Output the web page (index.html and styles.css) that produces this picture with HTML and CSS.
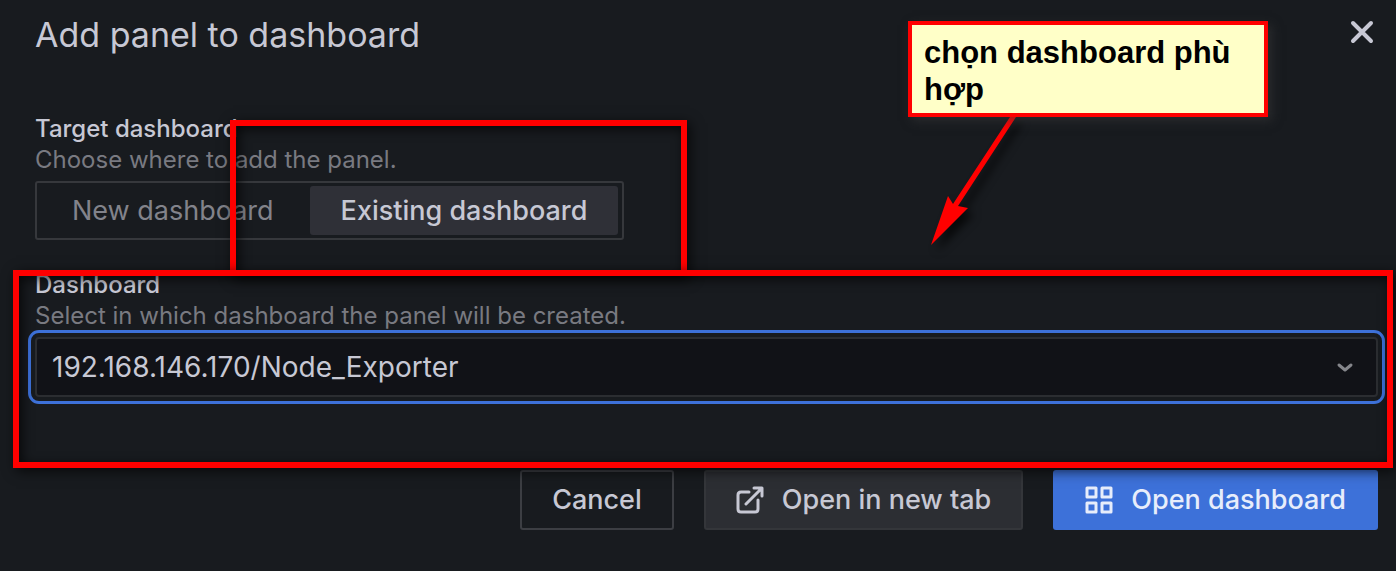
FILE: index.html
```html
<!DOCTYPE html>
<html lang="en">
<head>
<meta charset="utf-8">
<title>Add panel to dashboard</title>
<link rel="stylesheet" href="styles.css">
</head>
<body>
<main class="modal">
  <header class="modal-header">
    <h1 class="modal-title">Add panel to dashboard</h1>
    <button class="close" type="button" aria-label="Close">
      <svg width="24" height="24" viewBox="0 0 24 24" fill="none" stroke="currentColor" stroke-width="4" stroke-linecap="round"><path d="M3 3 21 21M21 3 3 21"/></svg>
    </button>
  </header>
  <form class="form">
    <fieldset class="field">
      <legend class="label">Target dashboard</legend>
      <p class="description">Choose where to add the panel.</p>
      <div class="radio-group">
        <input class="radio" type="radio" name="target" id="target-new">
        <label class="option" for="target-new">New dashboard</label>
        <input class="radio" type="radio" name="target" id="target-existing" checked>
        <label class="option" for="target-existing">Existing dashboard</label>
      </div>
    </fieldset>
    <div class="field">
      <label class="label" for="dashboard">Dashboard</label>
      <p class="description">Select in which dashboard the panel will be created.</p>
      <div class="select-wrap">
        <select class="select" id="dashboard">
          <option>192.168.146.170/Node_Exporter</option>
        </select>
        <svg class="caret" width="18" height="12" viewBox="0 0 18 12" fill="none" stroke="currentColor" stroke-width="3" stroke-linecap="round" stroke-linejoin="round"><path d="M3 4 9 9 15 4"/></svg>
      </div>
    </div>
    <div class="actions">
      <button class="button button-outline" type="button">Cancel</button>
      <button class="button button-secondary" type="button">
        <svg class="icon" width="28" height="28" viewBox="0 0 28 28" fill="none" stroke="currentColor" stroke-width="3" stroke-linecap="round" stroke-linejoin="round"><path d="M13 6H5Q2 6 2 9V23Q2 26 5 26H19Q22 26 22 23V14M10 18 25 3M18 2H26V10"/></svg>
        Open in new tab
      </button>
      <button class="button button-primary" type="button">
        <svg class="icon" width="28" height="28" viewBox="0 0 28 28" fill="none" stroke="currentColor" stroke-width="3" stroke-linejoin="round"><path d="M2 2H11V11H2ZM17 2H26V11H17ZM2 17H11V26H2ZM17 17H26V26H17Z"/></svg>
        Open dashboard
      </button>
    </div>
  </form>
  <div class="frame frame-target"></div>
  <div class="frame frame-dashboard"></div>
  <svg class="arrow" width="110" height="150" viewBox="0 0 110 150"><path fill="#f00" d="M103 12 45 101 55 103 18 140 35 91 40 99 97 12Z"/></svg>
  <aside class="note" lang="vi">chọn dashboard phù hợp</aside>
</main>
</body>
</html>
```
FILE: styles.css
```css
* { box-sizing: border-box; }

body {
  margin: 0;
  background: #181b1f;
  color: #c7c8d4;
  font-family: Inter, "Liberation Sans", sans-serif;
}

.modal {
  position: relative;
  min-height: 100vh;
  padding: 0 18px 41px 35px;
}

.modal-header {
  display: flex;
  align-items: center;
  justify-content: space-between;
  height: 70px;
  margin-bottom: 44px;
}

.modal-title {
  margin: 0;
  font-size: 34px;
  font-weight: 400;
  line-height: 40px;
}

.close {
  display: flex;
  padding: 0 4px 6px;
  border: 0;
  background: none;
  color: inherit;
}

.form {
  display: flex;
  flex-direction: column;
}

.field {
  min-width: 0;
  margin: 0 0 30px;
  padding: 0;
  border: 0;
}

.label {
  display: block;
  padding: 0;
  font-size: 24px;
  font-weight: 500;
  line-height: 30px;
}

.description {
  margin: 0 0 5px;
  color: #797a81;
  font-size: 24px;
  line-height: 32px;
}

.radio-group {
  position: relative;
  display: inline-flex;
  gap: 5px;
  padding: 3px 4px;
  border: 2px solid #36383c;
  border-radius: 3px;
  vertical-align: top;
}

.radio {
  position: absolute;
  opacity: 0;
}

.option {
  padding: 0 31px;
  border-radius: 3px;
  color: #82838b;
  font-size: 27px;
  line-height: 49px;
}

.radio:checked + .option {
  background: #2f3037;
  color: #c7c8d4;
  font-weight: 500;
}

.select-wrap {
  display: grid;
  align-items: center;
}

.select {
  grid-area: 1 / 1;
  width: 100%;
  height: 60px;
  padding: 0 15px;
  appearance: none;
  border: 2px solid #2b2d31;
  border-radius: 4px;
  outline: 3px solid #3d71d9;
  outline-offset: 4px;
  background: #111217;
  color: #c7c8d4;
  font: 400 28px/32px Inter, "Liberation Sans", sans-serif;
}

.caret {
  grid-area: 1 / 1;
  justify-self: end;
  margin-right: 24px;
  color: #85868b;
  pointer-events: none;
}

.actions {
  display: flex;
  justify-content: flex-end;
  gap: 30px;
  margin-top: 43px;
}

.button {
  display: flex;
  align-items: center;
  gap: 18px;
  height: 60px;
  padding: 0 30px;
  border: 2px solid transparent;
  border-radius: 3px;
  color: #c7c8d4;
  font: 500 27px/32px Inter, "Liberation Sans", sans-serif;
  white-space: nowrap;
}

.button-outline {
  border-color: #3c3e43;
  background: none;
}

.button-secondary {
  border-color: #34363a;
  background: #2c2e33;
}

.button-primary {
  background: #3d71d9;
  color: #e7edfb;
}

.frame {
  position: absolute;
  border: 6px solid #f00;
  box-shadow: 3px 3px 12px rgb(0 0 0 / 70%), inset 3px 3px 12px rgb(0 0 0 / 70%);
  pointer-events: none;
}

.frame-target {
  top: 120px;
  left: 230px;
  width: 457px;
  height: 156px;
  border-bottom: 0;
}

.frame-dashboard {
  top: 270px;
  right: 3px;
  left: 13px;
  height: 198px;
}

.arrow {
  position: absolute;
  top: 105px;
  right: 373px;
  filter: drop-shadow(6px 6px 4px rgb(0 0 0 / 70%));
}

.note {
  position: absolute;
  top: 21px;
  right: 128px;
  width: 360px;
  padding: 9px 12px 5px;
  border: 4px solid #f00;
  background: #ffffc8;
  box-shadow: 4px 4px 10px rgb(60 60 60 / 50%);
  color: #000;
  font: 700 31px/37px "Liberation Sans", sans-serif;
}
```
